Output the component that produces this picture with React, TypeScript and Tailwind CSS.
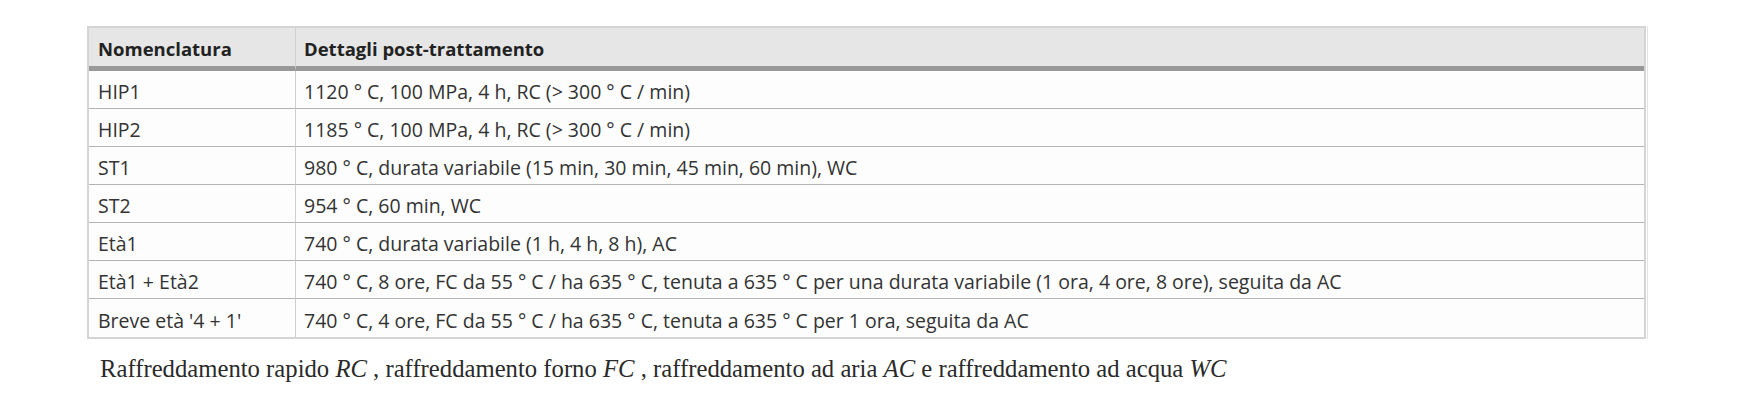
import React from "react";

const rows: [string, string][] = [
  ["HIP1", "1120 ° C, 100 MPa, 4 h, RC (> 300 ° C / min)"],
  ["HIP2", "1185 ° C, 100 MPa, 4 h, RC (> 300 ° C / min)"],
  ["ST1", "980 ° C, durata variabile (15 min, 30 min, 45 min, 60 min), WC"],
  ["ST2", "954 ° C, 60 min, WC"],
  ["Età1", "740 ° C, durata variabile (1 h, 4 h, 8 h), AC"],
  [
    "Età1 + Età2",
    "740 ° C, 8 ore, FC da 55 ° C / ha 635 ° C, tenuta a 635 ° C per una durata variabile (1 ora, 4 ore, 8 ore), seguita da AC",
  ],
  ["Breve età '4 + 1'", "740 ° C, 4 ore, FC da 55 ° C / ha 635 ° C, tenuta a 635 ° C per 1 ora, seguita da AC"],
];

export default function App() {
  return (
    <div className="w-[1739px] h-[414px] bg-white pl-[87px] pt-[26px]">
      <div className="w-[1560px] shadow-[1px_0_0_#e4e4e4]">
        <table
          className="w-[1559px] border-separate border-spacing-0 border-2 border-[#d4d4d4] text-[19.5px] text-[#333] bg-[#fdfdfd]"
          style={{ fontFamily: '"Open Sans", "Noto Sans", sans-serif' }}
        >
          <thead>
            <tr className="bg-[#e6e6e6]">
              <th className="w-[207px] h-[43px] px-[9px] pt-[4px] text-left text-[18.5px] font-bold text-[#222] border-r border-[#d0d0d0] border-b-[5px] border-b-[#999] align-middle">
                Nomenclatura
              </th>
              <th className="h-[43px] px-[8px] pt-[4px] text-left text-[18.5px] font-bold text-[#222] border-b-[5px] border-b-[#999] align-middle">
                Dettagli post-trattamento
              </th>
            </tr>
          </thead>
          <tbody>
            {rows.map(([a, b], i) => {
              const last = i === rows.length - 1;
              return (
                <tr key={i}>
                  <td
                    className={
                      last
                        ? "h-[38px] px-[9px] pt-[5px] leading-none border-r border-[#cfcfcf] align-middle whitespace-nowrap"
                        : "h-[38px] px-[9px] pt-[5px] leading-none border-r border-[#cfcfcf] border-b border-b-[#b4b4b4] align-middle whitespace-nowrap"
                    }
                  >
                    {a}
                  </td>
                  <td
                    className={
                      last
                        ? "h-[38px] px-[8px] pt-[5px] leading-none align-middle whitespace-nowrap"
                        : "h-[38px] px-[8px] pt-[5px] leading-none border-b border-b-[#b4b4b4] align-middle whitespace-nowrap"
                    }
                  >
                    {b}
                  </td>
                </tr>
              );
            })}
          </tbody>
        </table>
      </div>
      <p
        className="mt-[11px] pl-[13px] text-[24.7px] text-[#2a2a2a] whitespace-nowrap"
        style={{ fontFamily: '"Liberation Serif", serif' }}
      >
        Raffreddamento rapido <i>RC</i> , raffreddamento forno <i>FC</i> , raffreddamento ad aria <i>AC</i> e
        raffreddamento ad acqua <i>WC</i>
      </p>
    </div>
  );
}
